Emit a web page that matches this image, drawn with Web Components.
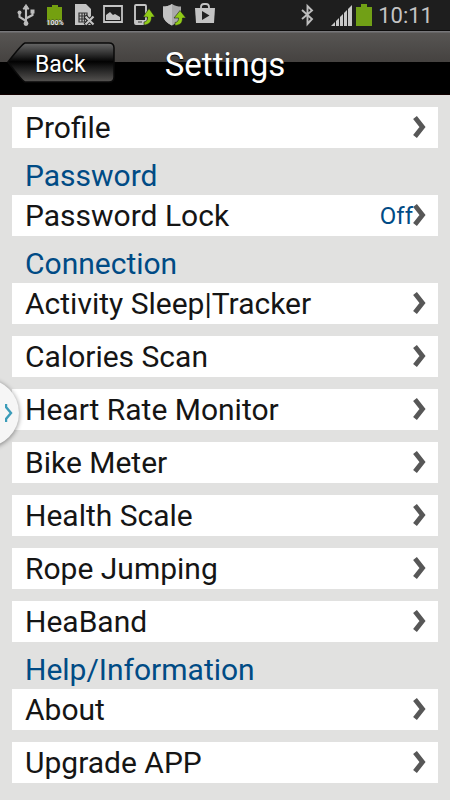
<!DOCTYPE html>
<html lang="en">
<head>
<meta charset="utf-8">
<meta name="viewport" content="width=device-width, initial-scale=1">
<title>Settings</title>
<style>
  body { margin: 0; background: #e1e1e0; font-family: Roboto, "Liberation Sans", sans-serif; color: #151515; }
</style>
</head>
<body>
<settings-screen></settings-screen>
<script>
const define = (name, html) => customElements.define(name, class extends HTMLElement {
  constructor() {
    super();
    const t = document.createElement('template');
    t.innerHTML = html;
    this.attachShadow({ mode: 'open' }).append(t.content.cloneNode(true));
  }
});

define('status-bar', `
<style>
  :host { display: flex; align-items: center; justify-content: space-between; height: 31px; box-sizing: border-box; padding: 0 17px 0 15px; background: #1e1e1e; border-bottom: 1px solid #0c0c0c; color: #c4c4c4; }
  .left { display: flex; align-items: center; gap: 6px; }
  .right { display: flex; align-items: center; }
  svg { display: block; }
  .bt { margin-right: 15px; }
  .bat { margin: 0 6px 0 4px; }
  time { padding-top: 1px; font-size: 22px; line-height: 30px; }
</style>
<div class="left">
  <svg width="22" height="24" viewBox="0 0 22 24" fill="none" stroke="#bdbdbd" stroke-width="2.1"><path d="M11 5V20M11 18L4.500 14V10M11 15.500L17.500 12V9"/><path d="M8 6L11 1.500L14 6Z" fill="#bdbdbd" stroke-width="1"/><circle cx="11" cy="20.500" r="2.400" fill="#bdbdbd" stroke="none"/><circle cx="4.500" cy="9.500" r="2" fill="#bdbdbd" stroke="none"/><path d="M15.500 6.500h4v4h-4z" fill="#bdbdbd" stroke="none"/></svg>
  <svg width="24" height="24" viewBox="0 0 24 24"><path d="M4 4h5V2h6v2h4v18H4z" fill="#74a010"/><text x="12" y="22" text-anchor="middle" font-size="7" font-weight="700" fill="#e8e8e8" stroke="#333" stroke-width="1" paint-order="stroke">100%</text></svg>
  <svg width="22" height="24" viewBox="0 0 22 24"><path d="M2 1h11l5 5v16H2z" fill="#c4c4c4"/><path d="M6 10h8v9H6zM6 13h8M6 16h8M9 10v9M11.500 10v9" fill="none" stroke="#343434" stroke-width="1.200"/><path d="M12 13l9 9M21 13l-9 9" stroke="#1e1e1e" stroke-width="4"/><path d="M12.500 13.500l8 8M20.500 13.500l-8 8" stroke="#c4c4c4" stroke-width="2.200"/></svg>
  <svg width="24" height="24" viewBox="0 0 24 24"><path d="M3 3h18v16H3z" fill="none" stroke="#c4c4c4" stroke-width="1.800"/><path d="M5 17v-5l4-3 3 3 2-1 5 3v3z" fill="#c4c4c4"/></svg>
  <svg width="24" height="24" viewBox="0 0 24 24"><path d="M5 2h9a1 1 0 0 1 1 1v17a1 1 0 0 1-1 1H5a1 1 0 0 1-1-1V3a1 1 0 0 1 1-1z" fill="none" stroke="#c4c4c4" stroke-width="1.900"/><path d="M4 17h11v4H4z" fill="#c4c4c4"/><path d="M7 19h4" stroke="#333"/><path d="M18 5.500L24 14h-3.500c0 5-2 7.500-7.500 8v-3c3-.5 3.500-2 3.500-5H12z" fill="#91cc17" stroke="#1e1e1e" stroke-width=".6"/></svg>
  <svg width="26" height="24" viewBox="0 0 26 24"><path d="M11 1c3 2 6 2.500 9 2.500v8c0 5-4 8.500-9 11-5-2.500-9-6-9-11v-8C5 3.500 8 3 11 1z" fill="#a9a9a9"/><path d="M11 1v21.500c-5-2.500-9-6-9-11v-8C5 3.500 8 3 11 1z" fill="#c2c2c2"/><path d="M19 7.500L25 15h-3.500c0 5-2 7-7.500 7.500v-3c3-.5 3.500-2 3.500-4.500h-4.500z" fill="#91cc17" stroke="#1e1e1e" stroke-width=".6"/></svg>
  <svg width="24" height="24" viewBox="0 0 24 24"><path d="M8 7V4a3 3 0 0 1 3-3h2a3 3 0 0 1 3 3v3" fill="none" stroke="#c4c4c4" stroke-width="1.800"/><path d="M2 5h20l-1 15H3z" fill="#c4c4c4"/><path d="M9 8l7.500 4.500L9 17z" fill="#222"/></svg>
</div>
<div class="right">
  <svg class="bt" width="16" height="24" viewBox="0 0 16 24" fill="none" stroke="#bdbdbd" stroke-width="1.900"><path d="M3 7l10 9-4.500 5V3L13 7.500 3 16"/></svg>
  <svg width="22" height="24" viewBox="0 0 22 24"><path d="M1 23L22 2v21z" fill="#c9c9c9"/><path d="M5.500 16v7M9.500 12v11M13.500 8v15M17.500 4v19" stroke="#1e1e1e" stroke-width="1"/></svg>
  <svg class="bat" width="16" height="24" viewBox="0 0 16 24"><path d="M0 4h5V1h6v3h5v19H0z" fill="#71a016"/></svg>
  <time>10:11</time>
</div>`);

define('title-bar', `
<style>
  :host { display: grid; grid-template-columns: 1fr auto 1fr; align-items: center; height: 64px; box-sizing: border-box; padding: 0 7px; color: #fff;
    background: linear-gradient(#77777a 0 1px, #575553 2px, #454240 31px, #000 31px); border-bottom: 1px solid #100; }
  h1 { margin: 0; padding-top: 4px; font-size: 33px; line-height: 40px; font-weight: 400; text-shadow: 0 1px 1px #000; }
  button { justify-self: start; display: grid; align-items: center; border: 0; padding: 0; background: none; color: inherit; font: inherit; cursor: pointer; }
  button > * { grid-area: 1 / 1; }
  svg { display: block; }
  span { padding: 0 28px; font-size: 23px; line-height: 28px; text-align: left; text-shadow: 0 1px 1px #000; }
  button > span { padding-top: 4px; }
  slot { display: block; }
</style>
<button type="button">
  <svg width="108" height="41" viewBox="0 0 108 41"><defs><linearGradient id="g" x2="0" y2="1"><stop offset="0" stop-color="#686868"/><stop offset=".3" stop-color="#2b2b2b"/><stop offset=".48" stop-color="#020202"/><stop offset=".65" stop-color="#1e1e1e"/><stop offset="1" stop-color="#565452"/></linearGradient></defs><path d="M18 1H102Q107 1 107 6V35Q107 40 102 40H18Q15 39 1 20Q15 2 18 1Z" fill="url(#g)" stroke="#0a0a0a" stroke-width="1.500"/></svg>
  <span><slot name="back"></slot></span>
</button>
<h1><slot></slot></h1>`);

define('section-title', `
<style>
  :host { display: block; padding: 10px 13px 1px; color: #004b85; }
  h2 { margin: 0; font-size: 30px; line-height: 36px; font-weight: 400; }
</style>
<h2><slot></slot></h2>`);

define('setting-group', `
<style>:host { display: flex; flex-direction: column; gap: 12px; }</style>
<slot></slot>`);

define('setting-row', `
<style>
  :host { display: block; }
  button { display: flex; align-items: center; width: 100%; height: 41px; box-sizing: border-box; padding: 0 12px 0 13px; border: 0; background: #fff; color: inherit; font: inherit; text-align: left; cursor: pointer; }
  .label { flex: 1; padding-top: 1px; font-size: 30px; line-height: 36px; white-space: nowrap; }
  .value { color: #004b85; font-size: 24px; line-height: 28px; }
  svg { display: block; }
</style>
<button type="button"><span class="label"><slot></slot></span><span class="value"><slot name="value"></slot></span>
<svg width="13" height="25" viewBox="0 0 13 25" aria-hidden="true"><path d="M2 2.500L9.500 12L2 21.500" fill="none" stroke="#575757" stroke-width="4.800"/></svg></button>`);

define('edge-handle', `
<style>
  :host { position: fixed; left: 0; top: 374px; width: 26px; height: 78px; overflow: hidden; }
  button { position: absolute; right: 7px; top: 5px; width: 68px; height: 68px; padding: 0 6px 0 0; border: 0; border-radius: 50%; background: #f6f6f6; box-shadow: 0 1px 5px #0007; display: flex; align-items: center; justify-content: flex-end; cursor: pointer; }
</style>
<button type="button" aria-label="Open panel"><svg width="8" height="20" viewBox="0 0 8 20" fill="none" stroke="#3b9cb9" stroke-width="2.400"><path d="M1 1V4L6 10L1 16V19"/></svg></button>`);

define('settings-screen', `
<style>
  :host { display: block; }
  main { display: block; padding: 12px 12px 17px; }
</style>
<status-bar></status-bar>
<title-bar><span slot="back">Back</span>Settings</title-bar>
<main>
  <setting-group><setting-row>Profile</setting-row></setting-group>
  <section-title>Password</section-title>
  <setting-group><setting-row>Password Lock<span slot="value">Off</span></setting-row></setting-group>
  <section-title>Connection</section-title>
  <setting-group>
    <setting-row>Activity Sleep|Tracker</setting-row>
    <setting-row>Calories Scan</setting-row>
    <setting-row>Heart Rate Monitor</setting-row>
    <setting-row>Bike Meter</setting-row>
    <setting-row>Health Scale</setting-row>
    <setting-row>Rope Jumping</setting-row>
    <setting-row>HeaBand</setting-row>
  </setting-group>
  <section-title>Help/Information</section-title>
  <setting-group>
    <setting-row>About</setting-row>
    <setting-row>Upgrade APP</setting-row>
  </setting-group>
</main>
<edge-handle></edge-handle>`);
</script>
</body>
</html>
